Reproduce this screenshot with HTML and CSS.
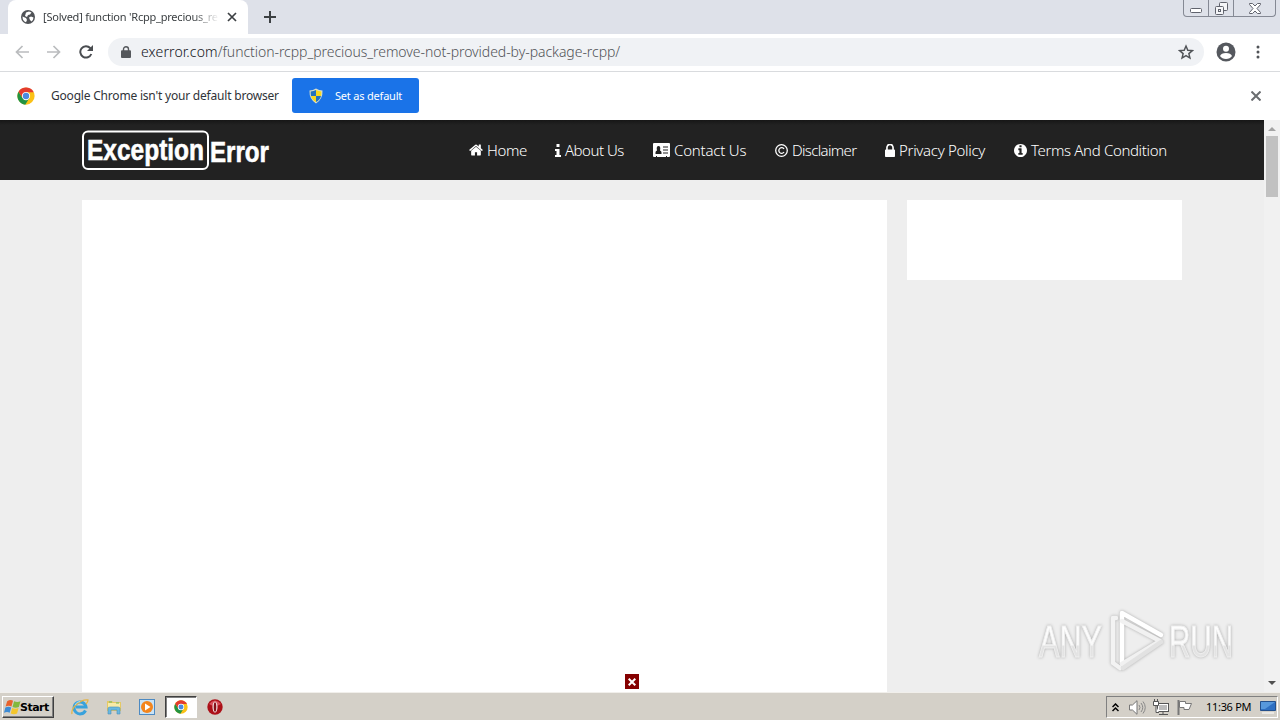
FILE: index.html
```html
<!DOCTYPE html>
<html lang="en">
<head>
    <meta charset="UTF-8">
    <title>[Solved] function 'Rcpp_precious_remove' not provided by package 'Rcpp'</title>
    <link rel="stylesheet" href="styles.css">
</head>
<body>

<!-- Shared icons -->
<svg class="defs" width="0" height="0">
    <symbol id="chrome" viewBox="0 0 48 48">
        <circle cx="24" cy="24" r="23" fill="#fbc116"/>
        <path d="M4.100 12.500A23 23 0 0 0 22 47L33 29 24 24 15 29z" fill="#229342"/>
        <path d="M4.100 12.500A23 23 0 0 1 43.900 12.500L44.700 14H24L15 29z" fill="#e33b2e"/>
        <circle cx="24" cy="24" r="11" fill="#fff"/>
        <circle cx="24" cy="24" r="8.500" fill="#4a8ae0"/>
    </symbol>
</svg>

<div class="tabstrip">
    <div class="tab">
        <svg class="globe" width="14" height="14" viewBox="0 0 14 14"><circle cx="7" cy="7" r="7" fill="#505357"/><path d="M1.500 6.500L5 8l1 2-1 2.300Q1.500 11 1.500 6.500zM5 2.500l3-1 2.500 1-1.500 2-2 .5-1 2-2-1zM8 7.500l2-1 2.500 1q0 2-2 4L9 10z" fill="#fff"/></svg>
        <span class="tab-title">[Solved] function 'Rcpp_precious_re</span>
        <svg class="tab-close" width="10" height="10" viewBox="0 0 10 10"><path d="M1 1l8 8M9 1L1 9" stroke="#3c4043" stroke-width="1.700"/></svg>
    </div>
    <svg class="plus" width="12" height="12" viewBox="0 0 12 12"><path d="M6 0v12M0 6h12" stroke="#3c4043" stroke-width="2"/></svg>
    <div class="window-buttons">
        <span class="wb wb-min"><svg width="12" height="5" viewBox="0 0 12 5"><rect x=".5" y=".5" width="11" height="4" rx="1" fill="#fff" stroke="#60636d"/></svg></span>
        <span class="wb wb-max"><svg width="13" height="13" viewBox="0 0 13 13" fill="#f4f5f8" stroke="#60636d"><rect x="4.500" y=".5" width="8" height="8" rx="1"/><rect x=".5" y="4.500" width="8" height="8" rx="1"/><rect x="3.500" y="7.500" width="2" height="2"/></svg></span>
        <span class="wb wb-close"><svg width="12" height="11" viewBox="0 0 12 11"><path d="M.5.500h3L6 3 8.500.500h3v1L8 5.500l3.500 4v1h-3L6 8l-2.500 2.500h-3v-1L4 5.500l-3.500-4z" fill="#fff" stroke="#60636d"/></svg></span>
    </div>
</div>

<div class="toolbar">
    <svg class="back" width="14" height="14" viewBox="0 0 14 14"><path d="M14 7H1.500M7.500 1L1.500 7l6 6" fill="none" stroke="#babcbe" stroke-width="1.700"/></svg>
    <svg class="forward" width="14" height="14" viewBox="0 0 14 14"><path d="M0 7h12.500M6.500 1l6 6-6 6" fill="none" stroke="#babcbe" stroke-width="1.700"/></svg>
    <svg class="reload" width="14" height="14" viewBox="0 0 14 14"><path d="M12.300 9A5.700 5.700 0 1 1 11.200 3L13 4.800" fill="none" stroke="#4a4d51" stroke-width="2"/><path d="M14 0v6H8z" fill="#4a4d51"/></svg>
    <div class="omnibox">
        <svg width="10" height="12" viewBox="0 0 10 12"><path d="M2.500 5V3.200a2.500 2.500 0 0 1 5 0V5" fill="none" stroke="#55585c" stroke-width="1.400"/><rect y="4.300" width="10" height="7.700" rx="1" fill="#55585c"/></svg>
        <span class="url"><b>exerror.com</b>/function-rcpp_precious_remove-not-provided-by-package-rcpp/</span>
        <svg class="star" width="16" height="16" viewBox="0 0 24 24"><path d="M12 3l2.700 6.300 6.800.600-5.200 4.500 1.600 6.700-5.900-3.600-5.900 3.600 1.600-6.700-5.200-4.500 6.800-.600z" fill="none" stroke="#505357" stroke-width="2.200"/></svg>
    </div>
    <svg class="avatar" width="20" height="20" viewBox="0 0 20 20"><circle cx="10" cy="10" r="9.500" fill="#55585e"/><circle cx="10" cy="6.700" r="3" fill="#fff"/><path d="M4 14q1.200-3 6-3t6 3q-2 3-6 3t-6-3z" fill="#fff"/></svg>
    <svg class="dots" width="4" height="14" viewBox="0 0 4 14" fill="#505357"><circle cx="2" cy="2" r="1.500"/><circle cx="2" cy="7" r="1.500"/><circle cx="2" cy="12" r="1.500"/></svg>
</div>

<div class="infobar">
    <svg width="18" height="18"><use href="#chrome"/></svg>
    <span class="info-text">Google Chrome isn't your default browser</span>
    <button class="default-btn">
        <svg width="14" height="16" viewBox="0 0 14 16"><path d="M7 .5Q10 2.500 13.500 2.500 14 11 7 15.500 0 11 .5 2.500 4 2.500 7 .5z" fill="#d9dfca"/><path d="M7 2v6H2Q1.600 6 1.700 3.500 4.500 3.400 7 2zM7 8h5q-1 4-5 6z" fill="#2472bf"/><path d="M7 2q2.500 1.400 5.300 1.500.1 2.500-.3 4.500H7zM2 8h5v6Q3 12 2 8z" fill="#f8d81f"/></svg>
        <span>Set as default</span>
    </button>
    <svg class="info-close" width="10" height="10" viewBox="0 0 10 10"><path d="M.5.500l9 9M9.500.500l-9 9" stroke="#6a6d70" stroke-width="2"/></svg>
</div>

<div class="viewport">
    <div class="page">
        <header>
            <div class="container head-row">
                <svg class="logo" width="190" height="42" viewBox="0 0 190 42">
                    <rect x="1" y="1.500" width="125" height="37.500" rx="5" fill="none" stroke="#fff" stroke-width="2"/>
                    <text x="5" y="30" textLength="117" lengthAdjust="spacingAndGlyphs">Exception</text>
                    <text x="128" y="32" textLength="59" lengthAdjust="spacingAndGlyphs">Error</text>
                </svg>
                <nav>
                    <a class="home"><svg width="14" height="14" viewBox="64 128 1664 1536"><path d="M1472 992v480q0 26-19 45t-45 19h-384v-384h-256v384h-384q-26 0-45-19t-19-45v-480q0-1 .5-3t.5-3l575-474 575 474q1 2 1 6zm223-69l-62 74q-8 9-21 11h-3q-13 0-21-7l-692-577-692 577q-12 8-24 7-13-2-21-11l-62-74q-8-10-7-23.500t11-21.500l719-599q32-26 76-26t76 26l244 204v-195q0-14 9-23t23-9h192q14 0 23 9t9 23v408l219 182q10 8 11 21.500t-7 23.500z"/></svg><span>Home</span></a>
                    <a class="about"><svg width="6" height="13" viewBox="0 0 6 13"><path d="M1.500 0h3v3h-3zM0 5h4.500v6H6v2H0v-2h1.500V7H0z"/></svg><span>About Us</span></a>
                    <a class="contact"><svg width="17" height="14" viewBox="0 0 17 14"><path d="M1 0h15q1 0 1 1v12q0 1-1 1h-2v-1h-1v1H4v-1H3v1H1q-1 0-1-1V1q0-1 1-1z"/><path d="M2.500 11V9.500Q2.500 8 4 7.500 3 3 5.500 3T7 7.500q1.500.500 1.500 2V11zM10 3.500h5v1h-5zM10 6.500h5v1h-5zM10 9.500h5v1h-5z" fill="#222"/></svg><span>Contact Us</span></a>
                    <a class="disclaimer"><svg width="13" height="13" viewBox="0 0 13 13"><g fill="none" stroke="#fff" stroke-width="1.300"><circle cx="6.500" cy="6.500" r="5.800"/><path d="M9 5A2.800 2.800 0 1 0 9 8"/></g></svg><span>Disclaimer</span></a>
                    <a class="privacy"><svg width="10" height="13" viewBox="320 192 1152 1344" preserveAspectRatio="none"><path d="M640 768h512v-192q0-106-75-181t-181-75-181 75-75 181v192zm832 96v576q0 40-28 68t-68 28h-960q-40 0-68-28t-28-68v-576q0-40 28-68t68-28h32v-192q0-184 132-316t316-132 316 132 132 316v192h32q40 0 68 28t28 68z"/></svg><span>Privacy Policy</span></a>
                    <a class="terms"><svg width="13" height="13" viewBox="128 128 1536 1536"><path d="M1152 1376v-160q0-14-9-23t-23-9h-96v-512q0-14-9-23t-23-9h-320q-14 0-23 9t-9 23v160q0 14 9 23t23 9h96v320h-96q-14 0-23 9t-9 23v160q0 14 9 23t23 9h448q14 0 23-9t9-23zm-128-896v-160q0-14-9-23t-23-9h-192q-14 0-23 9t-9 23v160q0 14 9 23t23 9h192q14 0 23-9t9-23zm640 416q0 209-103 385.500t-279.500 279.500-385.500 103-385.500-103-279.500-279.500-103-385.500 103-385.500 279.500-279.500 385.500-103 385.500 103 279.500 279.500 103 385.500z"/></svg><span>Terms And Condition</span></a>
                </nav>
            </div>
        </header>
        <div class="container columns">
            <main></main>
            <aside></aside>
        </div>
        <button class="ad-close"><svg width="8" height="8" viewBox="0 0 8 8"><path d="M.7.700l6.600 6.600M7.300.700L.7 7.300" stroke="#fff" stroke-width="2"/></svg></button>
        <!-- ANY.RUN watermark -->
        <svg class="watermark" width="210" height="74" viewBox="0 0 210 74">
            <defs>
                <linearGradient id="fade" x1="0" y1="0" x2="0" y2="1"><stop offset="0" stop-color="#fff"/><stop offset=".56" stop-color="#fafafa"/><stop offset=".6" stop-color="#e2e2e2"/><stop offset="1" stop-color="#e6e6e6"/></linearGradient>
            </defs>
            <text x="9" y="53" textLength="63" lengthAdjust="spacingAndGlyphs">ANY</text>
            <text x="139" y="53" textLength="64" lengthAdjust="spacingAndGlyphs">RUN</text>
            <g fill="none" stroke-width="4.500" stroke-linejoin="round" stroke-linecap="round">
                <path d="M86 14h-3v45l7 5" stroke="#f3f3f3"/>
                <path d="M92 60V9l39 22" stroke="#fff"/>
                <path d="M92 17l38 20-38 23" stroke="#f1f1f1"/>
                <path d="M131 38L93 64" stroke="#e2e2e2"/>
            </g>
        </svg>
    </div>
    <div class="scrollbar">
        <svg width="8" height="4" viewBox="0 0 8 4"><path d="M0 4l4-4 4 4z" fill="#a3a3a3"/></svg>
        <div class="thumb"></div>
        <svg class="down" width="8" height="4" viewBox="0 0 8 4"><path d="M0 0l4 4 4-4z" fill="#505050"/></svg>
    </div>
</div>

<div class="taskbar">
    <div class="start">
        <svg width="17" height="16" viewBox="0 0 16 15"><path d="M3 2q3-2 5.500-.5L7 7Q4.500 5.500 1.500 7z" fill="#e8622c"/><path d="M9.500 2q3 1.500 6 0L14 7.500q-3 1.500-6 0z" fill="#82b83c"/><path d="M1.300 8q3-1.500 5.500 0L5.300 13Q3 11.500 0 13z" fill="#3d8bd4"/><path d="M7.700 8.500q3 1.500 6 0L12.300 13.500q-3 1.500-6 0z" fill="#f4c62c"/></svg>
        <span>Start</span>
    </div>
    <div class="task"><svg width="18" height="18" viewBox="0 0 18 18" fill="none"><path d="M14.500 12.500A6 6 0 1 1 15 9H5" stroke="#39a2dc" stroke-width="3"/><path d="M1 16Q0 11 6 6T17 2Q17 4 15 6" stroke="#e4b548" stroke-width="1.300"/><path d="M4 7q1.500-3.500 5-3.500" stroke="#a5dcf4"/></svg></div>
    <div class="task"><svg width="16" height="16" viewBox="0 0 16 16"><path d="M1 2h5l1 1h8v9H1z" fill="#e5c965"/><path d="M2 4h12v7H2z" fill="#f8eaa8"/><path d="M3 3h3M10 4h3" stroke="#70b763"/><path d="M2 15V9.500Q2 8 4 8h8q2 0 2 1.500V15h-3v-4H5v4z" fill="#69b8e0" stroke="#478fb9" stroke-width=".6"/></svg></div>
    <div class="task"><svg width="16" height="16" viewBox="0 0 16 16"><rect x=".5" y=".5" width="15" height="15" fill="#c9e3f6" stroke="#4d8ac2"/><circle cx="8" cy="8" r="6" fill="#f3851d"/><path d="M6 4.500L11.500 8 6 11.500z" fill="#fff"/></svg></div>
    <div class="task active"><svg width="14" height="14"><use href="#chrome"/></svg></div>
    <div class="task"><svg width="16" height="16" viewBox="0 0 16 16"><circle cx="8" cy="8" r="7.700" fill="#ac1018"/><path d="M2 5q6-7 12 0-6 4-12 0z" fill="#d8515b"/><ellipse cx="8" cy="8" rx="2.500" ry="5.500" fill="#f6e8e8"/><ellipse cx="8" cy="8" rx="1.300" ry="4.800" fill="#851018"/></svg></div>
    <div class="tray">
        <svg class="chevrons" width="7" height="9" viewBox="0 0 7 9"><path d="M.5 4l3-3 3 3M.5 8l3-3 3 3" fill="none" stroke="#000" stroke-width="1.500"/></svg>
        <svg class="speaker" width="17" height="15" viewBox="0 0 17 15"><path d="M.5 5h3L8 .700v13.600L3.500 10h-3z" fill="#fff" stroke="#777"/><path d="M10 5q2 2.500 0 5M12 3q3.500 4.500 0 9M14 1.500q4.500 6 0 12" fill="none" stroke="#888"/></svg>
        <svg class="network" width="16" height="16" viewBox="0 0 16 16"><rect x="4.500" y="4.500" width="11" height="8" fill="#aaa" stroke="#555"/><rect x="5.500" y="5.500" width="9" height="6" fill="#bbb" stroke="#fff"/><path d="M6 15.500h9M10 13v2" stroke="#555"/><path d="M.5 2.500h5v4h-5zM1.500 0v2M4.500 0v2M3 7v6.500h3" fill="#fff" stroke="#555"/></svg>
        <svg class="flag" width="16" height="15" viewBox="0 0 16 15"><path d="M1.500 0v15" stroke="#777" stroke-width="2"/><path d="M2.500 1.500h6v2h6L12 9.500H7v-2H2.500z" fill="#fff" stroke="#777"/></svg>
        <span class="clock">11:36 PM</span>
        <svg class="desktop" width="16" height="13" viewBox="0 0 16 13"><path d="M.5.500h15v9H.5z" fill="#2f70c2" stroke="#24508c"/><path d="M1 1h14L5 8H1z" fill="#5798dc"/><path d="M2 12h12" stroke="#fff"/></svg>
    </div>
</div>

</body>
</html>
```

FILE: styles.css
```css
* { box-sizing: border-box; }
body { margin: 0; width: 1280px; height: 720px; overflow: hidden; display: flex; flex-direction: column; font-family: "Noto Sans", sans-serif; background: #fff; }
svg { display: block; flex: none; }
span { white-space: nowrap; }
button { font: inherit; border: 0; padding: 0; }
.defs { position: absolute; }

/* Browser chrome */
.tabstrip { height: 34px; flex: none; display: flex; align-items: center; background: #dee1e9; position: relative; padding-left: 8px; }
.tab { width: 240px; height: 34px; background: #fff; border-radius: 8px 8px 0 0; display: flex; align-items: center; padding-left: 13px; }
.tab-title { width: 176px; margin: -1px 0 0 8px; font-size: 11px; color: #3c4043; letter-spacing: -0.22px; -webkit-mask-image: linear-gradient(to right, #000 85%, transparent); }
.tab-close { margin-left: 8px; }
.plus { margin-left: 16px; }
.window-buttons { position: absolute; right: 4px; top: 0; width: 93px; height: 17px; display: flex; border: 1px solid #858994; border-top: 0; border-radius: 0 0 4px 4px; }
.wb { display: flex; justify-content: center; width: 25px; height: 16px; }
.wb + .wb { border-left: 1px solid #858994; }
.wb-min { padding-top: 8px; width: 24px; }
.wb-max { padding-top: 2px; }
.wb-close { width: 42px; padding-top: 3px; }

.toolbar { height: 38px; flex: none; display: flex; align-items: center; padding: 0 0 2px 15px; border-bottom: 1px solid #d9dbde; }
.forward { margin-left: 18px; }
.reload { margin-left: 18px; }
.omnibox { width: 1096px; height: 28px; margin-left: 15px; padding: 0 10px 0 13px; display: flex; align-items: center; background: #f0f2f5; border-radius: 14px; }
.url { margin-left: 10px; font-size: 14px; font-weight: 300; color: #505357; letter-spacing: -0.05px; }
.url b { font-weight: 300; color: #111318; letter-spacing: 0.15px; }
.star { margin-left: auto; }
.avatar { margin-left: 12px; }
.dots { margin-left: 20px; }

.infobar { height: 48px; flex: none; display: flex; align-items: center; padding: 0 19px 1px 17px; }
.info-text { width: 228px; margin-left: 16px; font-size: 12px; color: #303338; letter-spacing: -0.2px; }
.default-btn { width: 127px; height: 35px; margin-left: 13px; display: flex; align-items: center; padding-left: 17px; background: #1a73e8; border-radius: 3px; color: #fff; font-size: 11px; letter-spacing: -0.2px; }
.default-btn span { margin: -1px 0 0 12px; }
.info-close { margin-left: auto; }

/* Site */
.viewport { height: 572px; flex: none; display: flex; }
.page { width: 1264px; background: #eee; position: relative; overflow: hidden; }
header { height: 60px; background: linear-gradient(#161616, #222 5px); }
.container { width: 1100px; margin: 0 auto; }
.head-row { display: flex; align-items: center; height: 60px; }
.logo { margin-top: 2px; font: bold 30px "Liberation Sans", sans-serif; fill: #fff; }
.logo text { stroke: #fff; stroke-width: 0.6px; }
nav { margin-left: auto; padding-right: 14px; display: flex; gap: 28px; }
nav a { display: flex; align-items: center; gap: 4px; color: #fff; font-size: 15px; font-weight: 300; }
nav svg { fill: #fff; }
.home { width: 58px; letter-spacing: -0.4px; }
.about { width: 70px; letter-spacing: -0.5px; }
.contact { width: 94px; letter-spacing: -0.2px; }
.disclaimer { width: 82px; letter-spacing: -0.65px; }
.privacy { width: 101px; letter-spacing: -0.3px; }
.terms { width: 154px; letter-spacing: -0.35px; }
.columns { display: flex; align-items: flex-start; gap: 20px; padding-top: 20px; }
main { width: 805px; height: 500px; background: #fff; }
aside { width: 275px; height: 80px; background: #fff; }
.ad-close { position: absolute; left: 625px; bottom: 3px; width: 14px; height: 15px; display: flex; align-items: center; justify-content: center; background: #850000; }
.watermark { position: absolute; left: 1030px; top: 484px; font: 45px "Liberation Sans Narrow", "Liberation Sans", sans-serif; fill: url(#fade); filter: drop-shadow(0 0 1.5px #aaa); }
.watermark text { stroke: #f0f0f0; stroke-width: 1px; }

.scrollbar { width: 16px; display: flex; flex-direction: column; align-items: center; background: #f1f1f1; padding: 7px 0; }
.thumb { width: 12px; height: 61px; margin-top: 5px; background: #c1c1c1; }
.down { margin-top: auto; }

/* Taskbar */
.taskbar { height: 28px; flex: none; display: flex; align-items: center; background: #d4d0c8; border-top: 1px solid #f1efeb; padding: 1px 2px 0; }
.start { width: 52px; height: 22px; margin-right: 10px; display: flex; align-items: center; padding-left: 1px; font: bold 11px "DejaVu Sans", sans-serif; letter-spacing: -0.5px; border: 1px solid; border-color: #fff #404040 #404040 #fff; box-shadow: inset -1px -1px #808080; }
.start span { margin-left: -1px; }
.task { width: 32px; height: 22px; margin-right: 1.7px; display: flex; align-items: center; justify-content: center; }
.active { background: #fff; border: 1px solid; border-color: #404040 #fff #fff #404040; box-shadow: inset 1px 1px #808080; }
.tray { width: 172px; height: 22px; margin-left: auto; display: flex; align-items: center; padding-left: 5px; border: 1px solid; border-color: #808080 #fff #fff #808080; }
.speaker { margin-left: 10px; }
.network { margin-left: 7px; }
.flag { margin-left: 8px; }
.clock { width: 45px; margin: -1px 0 0 13px; font-size: 11px; letter-spacing: -0.3px; color: #000; }
.desktop { margin-left: 9px; }
```
